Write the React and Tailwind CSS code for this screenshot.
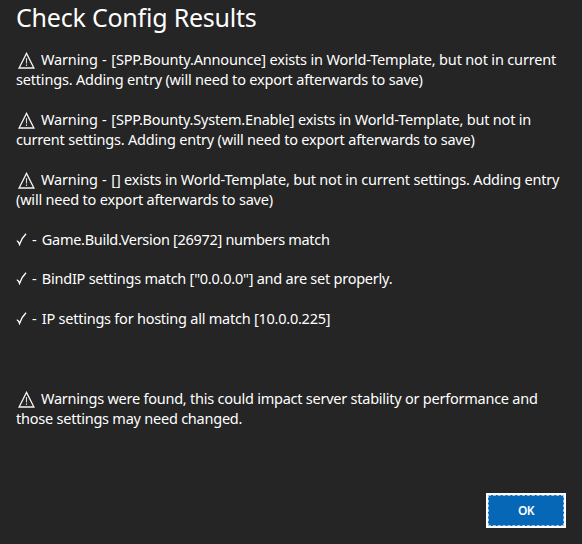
function WarningIcon() {
  return (
    <svg width="17" height="17" viewBox="0 0 17 17" fill="none" className="mt-[2px] mr-[6px] ml-[2px] shrink-0">
      <path d="M8.5 1.4 L15.9 16 H1.1 Z" stroke="#f4f4f4" strokeWidth="1.3" />
      <path d="M8.5 6 V11.4 M8.5 12.5 V14" stroke="#d8d8d8" strokeWidth="1.1" />
    </svg>
  );
}

function CheckIcon() {
  return (
    <svg width="11" height="13" viewBox="0 0 11 13" fill="none" className="mr-[5px] shrink-0">
      <path d="M0.8 8.2 C2 7.9 2.8 9.3 3.5 11.4 C5 7.2 7 3.7 10 0.8" stroke="#fff" strokeWidth="1.4" />
    </svg>
  );
}

function Line({ children }) {
  return <div className="flex h-5 items-center whitespace-pre leading-5">{children}</div>;
}

function Text({ tracking, children }) {
  return <span className={tracking}>{children}</span>;
}

function WarningLabel() {
  return (
    <>
      <WarningIcon />
      <Text tracking="tracking-[-0.16px]">Warning</Text>
      <Text tracking="tracking-[0.45px]">{' - '}</Text>
    </>
  );
}

function CheckLabel() {
  return (
    <>
      <CheckIcon />
      <Text tracking="tracking-[0.7px]">{'- '}</Text>
    </>
  );
}

export default function App() {
  return (
    <main className="flex h-[544px] w-[582px] flex-col overflow-hidden bg-[#252525] pl-4 font-['Noto_Sans',sans-serif] text-[14.5px] text-white">
      <h1 className="mt-[2px] h-[30px] whitespace-pre text-[25px] leading-[30px] tracking-[-0.22px]">Check Config Results</h1>
      <section className="mt-[17px] flex flex-col gap-5">
        <div>
          <Line>
            <WarningLabel />
            <Text tracking="tracking-[-0.17px]">[SPP.Bounty.Announce] exists in World-Template, but not in current</Text>
          </Line>
          <Line><Text tracking="tracking-[-0.19px]">settings. Adding entry (will need to export afterwards to save)</Text></Line>
        </div>
        <div>
          <Line>
            <WarningLabel />
            <Text tracking="tracking-[-0.2px]">[SPP.Bounty.System.Enable] exists in World-Template, but not in</Text>
          </Line>
          <Line><Text tracking="tracking-[-0.195px]">current settings. Adding entry (will need to export afterwards to save)</Text></Line>
        </div>
        <div>
          <Line>
            <WarningLabel />
            <Text tracking="tracking-[-0.19px]">[] exists in World-Template, but not in current settings. Adding entry</Text>
          </Line>
          <Line><Text tracking="tracking-[-0.2px]">(will need to export afterwards to save)</Text></Line>
        </div>
      </section>
      <section className="mt-5 flex flex-col">
        <Line>
          <CheckLabel />
          <Text tracking="tracking-[-0.3px]">Game.Build.Version [26972] numbers match</Text>
        </Line>
        <div className="mt-[19px]">
          <Line>
            <CheckLabel />
            <Text tracking="tracking-[-0.24px]">BindIP settings match ["0.0.0.0"] and are set properly.</Text>
          </Line>
        </div>
        <div className="mt-5">
          <Line>
            <CheckLabel />
            <Text tracking="tracking-[-0.24px]">IP settings for hosting all match [10.0.0.225]</Text>
          </Line>
        </div>
      </section>
      <section className="mt-[60px]">
        <Line>
          <WarningIcon />
          <Text tracking="tracking-[-0.24px]">Warnings were found, this could impact server stability or performance and</Text>
        </Line>
        <Line><Text tracking="tracking-[-0.23px]">those settings may need changed.</Text></Line>
      </section>
      <button className="mt-auto mr-4 mb-4 flex h-[35px] w-20 items-center justify-center self-end border-2 border-white bg-[#0667b7] text-[12px] font-semibold tracking-[-0.6px]">
        <span className="flex h-full w-full items-center justify-center border border-dashed border-[#9dc5e6]">OK</span>
      </button>
    </main>
  );
}
